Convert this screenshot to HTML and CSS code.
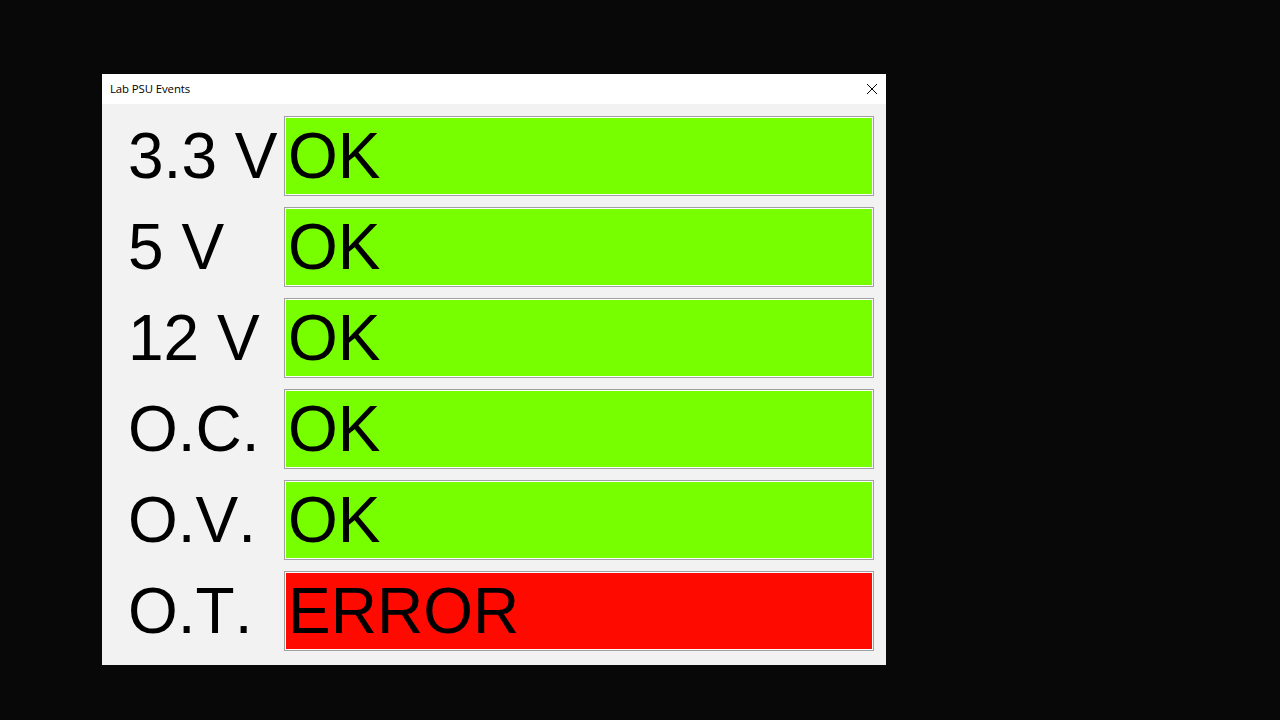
FILE: index.html
```html
<!DOCTYPE html>
<html>
<head>
<meta charset="utf-8">
<title>Lab PSU Events</title>
<link rel="stylesheet" href="styles.css">
</head>
<body>
<div class="window">
  <div class="titlebar">
    <span class="title">Lab PSU Events</span>
    <svg class="close" width="12" height="12" viewBox="0 0 12 12"><path d="M1 1L11 11M11 1L1 11" stroke="#000" stroke-width="1"/></svg>
  </div>
  <div class="content">
    <div class="label">3.3 V</div><div class="status ok">OK</div>
    <div class="label">5 V</div><div class="status ok">OK</div>
    <div class="label">12 V</div><div class="status ok">OK</div>
    <div class="label">O.C.</div><div class="status ok">OK</div>
    <div class="label">O.V.</div><div class="status ok">OK</div>
    <div class="label">O.T.</div><div class="status err">ERROR</div>
  </div>
</div>
</body>
</html>
```
FILE: styles.css
```css
html, body {
  margin: 0;
  background: #080808;
}
body {
  padding: 74px 0 0 102px;
}
.window {
  width: 784px;
  height: 591px;
  background: #f2f2f2;
  display: flex;
  flex-direction: column;
}
.titlebar {
  height: 30px;
  background: #ffffff;
  display: flex;
  align-items: center;
  justify-content: space-between;
  padding: 0 9px 0 8px;
  box-sizing: border-box;
}
.title {
  font-family: "Open Sans", "Noto Sans", sans-serif;
  font-size: 11.4px;
  letter-spacing: -0.1px;
  color: #000;
  position: relative;
  top: -1px;
}
.close {
  display: block;
  margin-right: -1px;
}
.content {
  display: grid;
  grid-template-columns: 156px 590px;
  grid-auto-rows: 80px;
  row-gap: 11px;
  padding: 12px 0 0 26px;
}
.label, .status {
  font-family: "Liberation Sans", Arial, sans-serif;
  font-size: 64px;
  line-height: 74px;
  color: #000;
  white-space: nowrap;
  font-kerning: none;
}
.label {
  padding-top: 3px;
}
.status {
  border: 1px solid #a0a0a0;
  box-shadow: inset 0 0 0 1px #ffffff;
  padding: 2px 0 0 3px;
  box-sizing: border-box;
}
.ok {
  background: #77ff00;
}
.err {
  background: #ff0a00;
}
```
